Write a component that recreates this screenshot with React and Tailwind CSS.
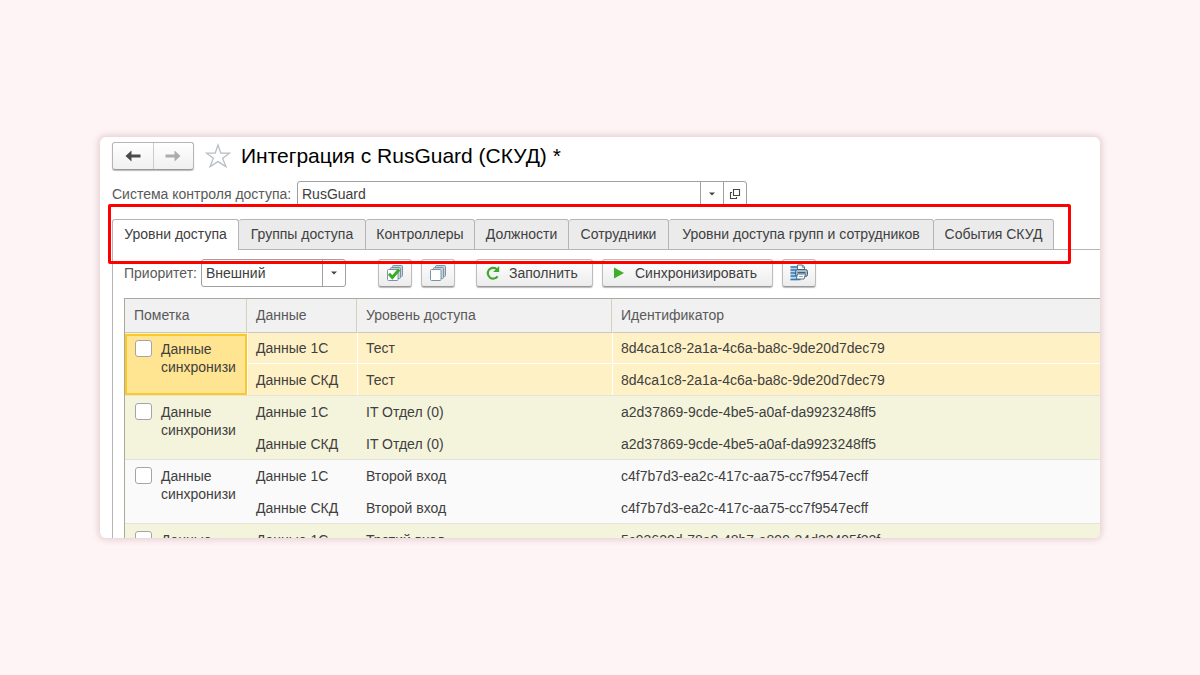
import React from "react";

const tabs = [
  { label: "Уровни доступа", width: "w-[127px]" },
  { label: "Группы доступа", width: "w-[127px]" },
  { label: "Контроллеры", width: "w-[109px]" },
  { label: "Должности", width: "w-[94px]" },
  { label: "Сотрудники", width: "w-[100px]" },
  { label: "Уровни доступа групп и сотрудников", width: "w-[265px]" },
  { label: "События СКУД", width: "w-[120px]" },
];

const records = [
  { level: "Тест", id: "8d4ca1c8-2a1a-4c6a-ba8c-9de20d7dec79" },
  { level: "IT Отдел (0)", id: "a2d37869-9cde-4be5-a0af-da9923248ff5" },
  { level: "Второй вход", id: "c4f7b7d3-ea2c-417c-aa75-cc7f9547ecff" },
  { level: "Третий вход", id: "5c93620d-78a8-48b7-a899-34d22495f22f" },
];

function Arrow({ back, className }) {
  return (
    <svg viewBox="0 0 16 12" className={`h-3 w-4 ${className}`} aria-hidden="true">
      <path
        d={back ? "M0.5 6 6.5 0.5V4.6H15.5V7.4H6.5V11.5Z" : "M15.5 6 9.5 0.5V4.6H0.5V7.4H9.5V11.5Z"}
        fill="currentColor"
      />
    </svg>
  );
}

function Star() {
  return (
    <svg viewBox="0 0 26 26" className="h-[26px] w-[26px]" aria-hidden="true">
      <path
        d="M13 2 15.8 10.2H24.4L17.6 15.3 20.9 23.6 13 18.6 5.1 23.6 8.4 15.3 1.6 10.2H10.2Z"
        fill="#fff"
        stroke="#b9bec2"
        strokeWidth="1.3"
      />
    </svg>
  );
}

function Caret() {
  return (
    <svg viewBox="0 0 6 4" className="h-1 w-1.5" aria-hidden="true">
      <path d="M0 0.4H6L3 3.6Z" fill="#444" />
    </svg>
  );
}

function OpenIcon() {
  return (
    <svg viewBox="0 0 12 12" className="h-3 w-3" fill="none" stroke="#444" strokeWidth="1.1" aria-hidden="true">
      <path d="M4.5 1.5H10.5V7.5H4.5Z" />
      <path d="M3 4.5H1.5V10.5H7.5V9" />
    </svg>
  );
}

function Stack({ checked }) {
  return (
    <svg viewBox="0 0 18 18" className="h-[18px] w-[18px]" aria-hidden="true">
      <g stroke="#7b94a5" strokeWidth="1" fill="#c9d3da">
        <rect x="6.5" y="1.5" width="10" height="11" rx="1" />
        <rect x="4.5" y="3.5" width="10" height="11" rx="1" />
        <rect x="1.5" y="5.5" width="10.5" height="11" rx="1" fill="#fff" />
      </g>
      {checked && (
        <path d="M3 9.8 6.3 13.4 13.2 5.6" fill="none" stroke="#36ad24" strokeWidth="3" />
      )}
    </svg>
  );
}

function Refresh() {
  return (
    <svg viewBox="0 0 16 16" className="h-4 w-4" aria-hidden="true">
      <path d="M11.6 4A5.4 5.4 0 1 0 12.6 11.3" fill="none" stroke="#3fab2d" strokeWidth="2.2" />
      <path d="M14.2 1V7H8.2Z" fill="#3fab2d" />
    </svg>
  );
}

function Play() {
  return (
    <svg viewBox="0 0 10 12" className="h-3 w-2.5" aria-hidden="true">
      <path d="M0 0.5 10 6 0 11.5Z" fill="#3fae29" />
    </svg>
  );
}

function Printer() {
  return (
    <svg viewBox="0 0 18 18" className="h-[18px] w-[18px]" aria-hidden="true">
      <path d="M0.5 2.5H8V16.5H0.5Z" fill="#b9d6ee" />
      <path d="M0.5 3H8M0.5 6H6M0.5 9H6M0.5 12H6M0.5 15.5H10.5" stroke="#3978ae" strokeWidth="1.3" />
      <path d="M7.5 6V1H12.5L14.5 3V6" fill="#fff" stroke="#50708a" />
      <path d="M12.3 1V3.3H14.5" fill="none" stroke="#50708a" strokeWidth="0.8" />
      <rect x="5.5" y="5.5" width="12" height="7" rx="2" fill="#a5bccd" stroke="#405f78" />
      <path d="M7.5 8.5H15.5" stroke="#405f78" />
      <path d="M7.5 10H15.5L14 15H6.3Z" fill="#fff" stroke="#50708a" />
      <path d="M9 12.5H13" stroke="#8fa5b5" />
    </svg>
  );
}

function ToolButton({ className = "", children, ...rest }) {
  return (
    <button
      type="button"
      className={`flex h-7 items-center rounded-[3px] border border-[#bdbdbd] border-b-[#999] bg-linear-to-b from-white to-[#ececec] shadow-[0_1px_1px_#bbb] ${className}`}
      {...rest}
    >
      {children}
    </button>
  );
}

function Record({ level, id, index }) {
  const selected = index === 0;
  const fill = selected ? "bg-[#fff1c6]" : index % 2 ? "bg-[#f4f4dc]" : "bg-[#fafafa]";
  const top = selected
    ? "h-[31px] border-t border-l border-t-[#c9c9c0] border-l-white px-2"
    : "h-8 border-t border-t-[#e3e3dc] px-[9px]";
  const bottom = selected ? "h-8 border-t border-l border-white px-2" : "h-8 border-t border-transparent px-[9px]";
  return (
    <tbody className={fill}>
      <tr>
        <td rowSpan={2} className={`p-0 align-top ${selected ? "border-t border-t-[#c9c9c0]" : "border-t border-t-[#e3e3dc]"}`}>
          <label
            className={`flex gap-[9px] overflow-hidden border-2 pl-2 leading-[18px] ${
              selected ? "mt-px h-[61px] border-[#fcc926] bg-[#ffe591] pt-1" : "border-transparent pt-[5px]"
            }`}
          >
            <input
              type="checkbox"
              className="h-[17px] w-[17px] shrink-0 appearance-none rounded-[3px] border border-[#a5a5a5] bg-white checked:bg-[#3fab2d]"
            />
            <span>
              Данные
              <br />
              синхронизи
            </span>
          </label>
        </td>
        <td className={top}>Данные 1С</td>
        <td className={top}>{level}</td>
        <td className={top}>{id}</td>
      </tr>
      <tr>
        <td className={bottom}>Данные СКД</td>
        <td className={bottom}>{level}</td>
        <td className={bottom}>{id}</td>
      </tr>
    </tbody>
  );
}

export default function App() {
  return (
    <div className="h-screen bg-[#fff4f5] px-[100px] py-[137px] font-['Liberation_Sans',Arial,sans-serif] text-sm text-[#404040]">
      <main className="flex h-full flex-col overflow-hidden rounded-md bg-white pl-3 shadow-[0_0_6px_2px_rgba(120,70,80,0.2)]">
        <header className="flex items-center pt-[5px]">
          <div className="flex h-7 w-[82px] rounded-[3px] border border-[#b5b5b5] border-b-[#999] bg-linear-to-b from-white to-[#f0f0f0] shadow-[0_1px_1px_#bbb]">
            <button type="button" aria-label="Назад" className="flex flex-1 items-center justify-center border-r border-[#ccc]">
              <Arrow back className="text-[#4a4a4a]" />
            </button>
            <button type="button" aria-label="Вперёд" className="flex flex-1 items-center justify-center">
              <Arrow className="text-[#acacac]" />
            </button>
          </div>
          <button type="button" aria-label="В избранное" className="ml-[11px]">
            <Star />
          </button>
          <h1 className="ml-[10px] text-[21px] leading-7 text-black">Интеграция с RusGuard (СКУД) *</h1>
        </header>

        <div className="flex items-center pt-[11px]">
          <label htmlFor="system" className="w-[185px] whitespace-nowrap text-[#595959]">
            Система контроля доступа:
          </label>
          <div className="flex h-[26px] w-[450px] rounded-[3px] border border-[#a0a0a0] bg-white">
            <input id="system" type="text" defaultValue="RusGuard" className="min-w-0 flex-1 px-1 outline-none" />
            <button type="button" aria-label="Выбрать" className="flex w-[23px] items-center justify-center border-l border-[#a0a0a0]">
              <Caret />
            </button>
            <button type="button" aria-label="Открыть" className="flex w-[23px] items-center justify-center border-l border-[#a0a0a0]">
              <OpenIcon />
            </button>
          </div>
        </div>

        <div className="mt-3 border-b border-[#b5b5b5]">
          <div role="tablist" className="relative -mb-px flex w-fit">
            {tabs.map((tab, i) => (
              <button
                key={tab.label}
                type="button"
                role="tab"
                aria-selected={i === 0}
                className={`h-[31px] rounded-t-[3px] border-t border-r border-[#b5b5b5] whitespace-nowrap ${tab.width} ${
                  i === 0 ? "border-l bg-white pb-0.5" : "border-b bg-[#ebebeb] pb-px"
                }`}
              >
                {tab.label}
              </button>
            ))}
            <div className="pointer-events-none absolute -top-[15px] -right-[17px] -bottom-[14px] -left-1 z-10 rounded-xs border-3 border-[#ff0000]" />
          </div>
        </div>

        <section className="min-h-0 flex-1 overflow-hidden border-l border-[#b5b5b5] pl-[11px]">
          <div className="flex items-center pt-[9px] pb-[11px]">
            <label htmlFor="priority" className="w-[77px] whitespace-nowrap text-[#595959]">
              Приоритет:
            </label>
            <div className="relative w-[145px]">
              <select
                id="priority"
                className="block h-7 w-full appearance-none rounded-[3px] border border-[#a0a0a0] bg-white pr-7 pl-1 outline-none"
              >
                <option>Внешний</option>
              </select>
              <span className="pointer-events-none absolute inset-y-px right-px flex w-[23px] items-center justify-center border-l border-[#a0a0a0]">
                <Caret />
              </span>
            </div>
            <ToolButton className="ml-8 w-[34px] justify-center" aria-label="Отметить все">
              <Stack checked />
            </ToolButton>
            <ToolButton className="ml-[9px] w-[34px] justify-center" aria-label="Снять отметки">
              <Stack />
            </ToolButton>
            <ToolButton className="ml-[21px] w-[117px] gap-2 pl-2">
              <Refresh />
              Заполнить
            </ToolButton>
            <ToolButton className="ml-[9px] w-[171px] gap-[11px] pl-[11px]">
              <Play />
              Синхронизировать
            </ToolButton>
            <ToolButton className="ml-[9px] w-[34px] justify-center" aria-label="Печать">
              <Printer />
            </ToolButton>
          </div>

          <table className="w-full table-fixed border-separate border-spacing-0 border-t border-l border-[#a9a9a0] text-left">
            <colgroup>
              <col className="w-[122px]" />
              <col className="w-[110px]" />
              <col className="w-[255px]" />
              <col />
            </colgroup>
            <thead className="bg-[#f1f1f1] text-[#595959]">
              <tr>
                <th className="h-[33px] border-r border-[#d2d2bd] px-[9px] pb-px font-normal">Пометка</th>
                <th className="border-r border-[#d2d2bd] px-[9px] pb-px font-normal">Данные</th>
                <th className="border-r border-[#d2d2bd] px-[9px] pb-px font-normal">Уровень доступа</th>
                <th className="px-[9px] pb-px font-normal">Идентификатор</th>
              </tr>
            </thead>
            {records.map((record, i) => (
              <Record key={record.id} index={i} {...record} />
            ))}
          </table>
        </section>
      </main>
    </div>
  );
}
